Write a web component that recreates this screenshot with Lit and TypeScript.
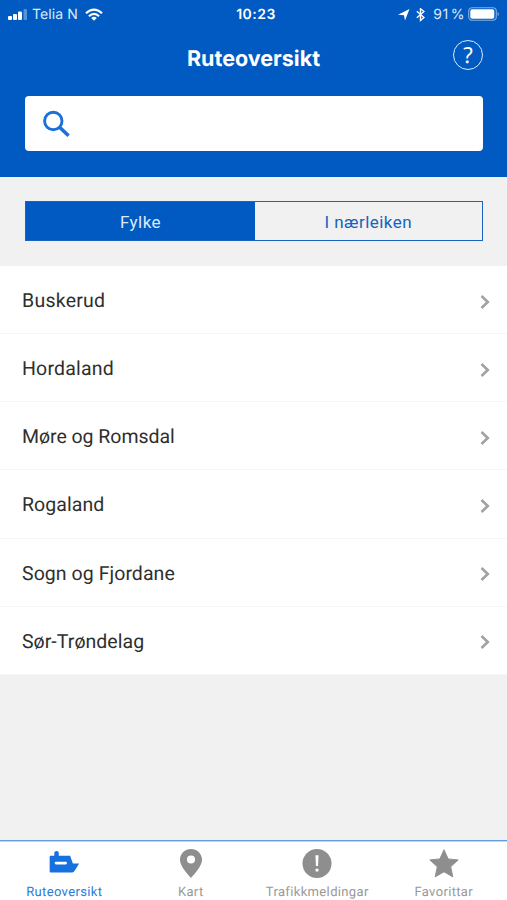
import { LitElement, html, css, svg } from "lit";
import { customElement, state } from "lit/decorators.js";
import { classMap } from "lit/directives/class-map.js";

const tabs = [
  {
    label: "Ruteoversikt",
    icon: svg`<path d="M1.200 9Q1.200 8 2.200 8H6V4.800Q6 3 8.300 3T10.600 4.800V8H22.300L25.200 16H31.600L27.700 22.500Q26.300 25.200 24.600 25.200H2.200Q1.200 25.200 1.200 24.200Z" fill="#1671df"/><rect x="6.400" y="14.200" width="12.600" height="2.800" rx="1.200" fill="#fff"/>`,
  },
  {
    label: "Kart",
    icon: svg`<path fill-rule="evenodd" d="M16 1C9.800 1 4.600 5.800 4.600 12c0 7.400 11.400 18.700 11.400 18.700S27.400 19.400 27.400 12C27.400 5.800 22.200 1 16 1Zm0 6.700a4.200 4.200 0 1 1 0 8.400a4.200 4.200 0 0 1 0-8.400Z" fill="#8e8e8e"/>`,
  },
  {
    label: "Trafikkmeldingar",
    icon: svg`<circle cx="16" cy="16" r="15" fill="#8e8e8e"/><path d="M14.400 7.400h3.200l-.5 11.300h-2.200Z" fill="#fff"/><circle cx="16" cy="22.800" r="1.700" fill="#fff"/>`,
  },
  {
    label: "Favorittar",
    icon: svg`<path d="M16 1.800L20.300 11.300L30.600 12.300L22.900 19.400L25.100 29.800L16 24.600L6.900 29.800L9.100 19.400L1.400 12.300L11.700 11.300Z" fill="#8e8e8e" stroke="#8e8e8e" stroke-linejoin="round"/>`,
  },
];

const counties = [
  { name: "Buskerud", cls: "c0" },
  { name: "Hordaland", cls: "c1" },
  { name: "Møre og Romsdal", cls: "c2" },
  { name: "Rogaland", cls: "c3" },
  { name: "Sogn og Fjordane", cls: "c4" },
  { name: "Sør-Trøndelag", cls: "c5" },
];

@customElement("app-root")
export class AppRoot extends LitElement {
  @state() private segment = 0;

  static styles = css`
    :host {
      display: flex;
      flex-direction: column;
      height: 900px;
      background: #f1f1f1;
      font-family: Roboto, "Liberation Sans", sans-serif;
      overflow: hidden;
      text-rendering: geometricPrecision;
    }
    * { box-sizing: border-box; }
    svg { display: block; flex: none; }
    header { height: 177px; background: #005ac1; color: #fff; flex: none; }
    .status {
      display: grid;
      grid-template-columns: 1fr auto 1fr;
      align-items: center;
      height: 28px;
      padding: 0 7px 0 8px;
      font: 14px/28px Inter, sans-serif;
    }
    .left, .right { display: flex; align-items: center; }
    .right { justify-content: flex-end; }
    .carrier { margin: 0 7px 0 5px; letter-spacing: 0.100px; color: #dceafa; }
    .clock { padding: 1px 0 0 4px; font-weight: 600; letter-spacing: 0.500px; }
    .bt { margin: 0 8px 0 6px; }
    .pct { margin-right: 3px; color: #dceafa; letter-spacing: 0.400px; word-spacing: -2px; }
    .bar {
      display: grid;
      grid-template-columns: 1fr auto 1fr;
      align-items: center;
      height: 68px;
      padding: 0 24px;
    }
    h1 { grid-column: 2; margin: -6px 0 0; font: 700 21.500px/28px Inter, sans-serif; letter-spacing: 0; }
    .help {
      justify-self: end;
      width: 30px;
      height: 30px;
      margin-top: -14px;
      border: 1.400px solid #dceafa;
      border-radius: 50%;
      font: 22px/28px "Noto Sans", sans-serif;
      text-align: center;
    }
    .search {
      display: flex;
      align-items: center;
      height: 55px;
      margin: 0 24px 0 25px;
      padding-left: 16px;
      border-radius: 4px;
      background: #fff;
    }
    .segments {
      display: grid;
      grid-template-columns: 229px 1fr;
      flex: none;
      height: 40px;
      margin: 24px 24.500px 25px 25px;
      border: 1px solid #1763bd;
    }
    .seg {
      border: 0;
      padding: 2px 0 0;
      background: transparent;
      color: #1763bd;
      font: 17px/36px Roboto, sans-serif;
      letter-spacing: 0.450px;
    }
    .seg.on { background: #005ac1; color: #dceafa; }
    ul {
      display: grid;
      grid-template-rows: 68px repeat(5, 68.200px);
      flex: none;
      list-style: none;
      margin: 0;
      padding: 0;
      background: #fff;
    }
    li {
      display: flex;
      align-items: center;
      justify-content: space-between;
      padding: 2px 16px 0 22px;
      border-bottom: 1px solid #f5f5f5;
      font-size: 19.500px;
      color: #2e2e2e;
    }
    li svg { margin-top: 2px; }
    .c0 { letter-spacing: 0.250px; }
    .c1 { letter-spacing: 0.200px; }
    .c2 { letter-spacing: -0.030px; }
    .c3 { letter-spacing: 0.080px; }
    .c4 { letter-spacing: 0.060px; }
    .c5 { letter-spacing: 0.040px; }
    nav {
      display: grid;
      grid-template-columns: repeat(4, 1fr);
      height: 60px;
      margin-top: auto;
      padding-left: 1px;
      border-top: 1px solid #5f9de0;
      box-shadow: inset 0 1px #bfd8f3;
      background: #fff;
    }
    .tab {
      display: flex;
      flex-direction: column;
      align-items: center;
      padding-top: 7px;
      font-size: 13px;
      line-height: 18px;
      color: #999;
      letter-spacing: 0.350px;
    }
    .tab svg { margin-bottom: 5px; }
    .tab.on { color: #2a7adb; }
  `;

  render() {
    return html`
      <header>
        <div class="status">
          <div class="left">
            <svg width="19" height="14" viewBox="0 0 19 14" fill="#fff">
              <rect x="0" y="8" width="4" height="4" rx="1" /><rect x="5" y="6" width="4" height="6" rx="1" />
              <rect x="10" y="3.500" width="4" height="8.500" rx="1" /><rect x="15.500" y="1" width="3.500" height="11" rx="1" opacity=".35" />
            </svg>
            <span class="carrier">Telia N</span>
            <svg width="18" height="14" viewBox="0 0 18 14" fill="none" stroke="#fff" stroke-width="2.200">
              <path d="M1 5.300Q9-2.200 17 5.300M3.900 8.200Q9 3.600 14.100 8.200" /><path d="M6.200 9.900Q9 7.700 11.800 9.900L9 12.800Z" fill="#fff" stroke="none" />
            </svg>
          </div>
          <span class="clock">10:23</span>
          <div class="right">
            <svg width="12" height="12" viewBox="0 0 12 12"><path d="M0 5.700L11.500 0L7 11.500L6 6.300Z" fill="#fff" /></svg>
            <svg class="bt" width="9" height="14" viewBox="0 0 9 14" fill="none" stroke="#fff" stroke-width="1.400"><path d="M.8 3.300L8 9.500L4.500 12.500V.8L8 3.500L.8 9.700" /></svg>
            <span class="pct">91 %</span>
            <svg width="32" height="15" viewBox="0 0 32 15">
              <rect x=".7" y=".7" width="27.600" height="12.600" rx="3.500" fill="none" stroke="#82b1e5" stroke-width="1.100" />
              <rect x="2.300" y="2.300" width="24" height="9.400" rx="1.800" fill="#fff" /><path d="M29.600 4.700Q32.200 7 29.600 9.300Z" fill="#82b1e5" />
            </svg>
          </div>
        </div>
        <div class="bar">
          <h1>Ruteoversikt</h1>
          <div class="help">?</div>
        </div>
        <div class="search">
          <svg width="31" height="30" viewBox="0 0 31 30" fill="none" stroke="#1b71d6">
            <circle cx="12.300" cy="12" r="8.700" stroke-width="2.900" /><path d="M18.600 18.200L27.600 26.800" stroke-width="3.600" />
          </svg>
        </div>
      </header>
      <div class="segments">
        ${["Fylke", "I nærleiken"].map((s, i) => html`<button
          class=${classMap({ seg: true, on: this.segment === i })}
          @click=${() => (this.segment = i)}>${s}</button>`)}
      </div>
      <ul>
        ${counties.map((c) => html`<li>
          <span class=${c.cls}>${c.name}</span>
          <svg width="12" height="16" viewBox="0 0 12 16" fill="none" stroke="#a2a2a2" stroke-width="2.600"><path d="M2.500 2L8.800 8L2.500 14" /></svg>
        </li>`)}
      </ul>
      <nav>
        ${tabs.map((t, i) => html`<div class=${classMap({ tab: true, on: i === 0 })}>
          <svg width="32" height="31" viewBox="0 0 32 32">${t.icon}</svg>
          <span>${t.label}</span>
        </div>`)}
      </nav>
    `;
  }
}
